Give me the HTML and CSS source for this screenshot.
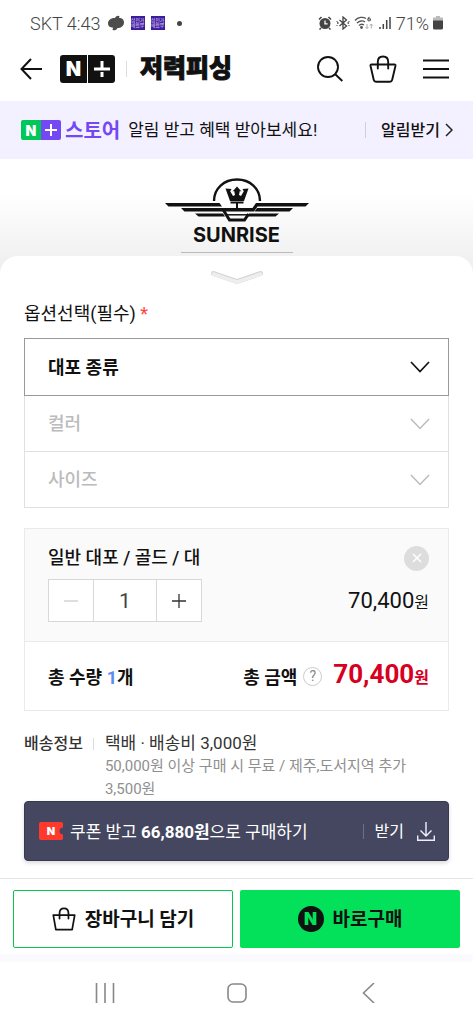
FILE: index.html
```html
<!DOCTYPE html>
<html lang="ko">
<head>
<meta charset="utf-8">
<meta name="viewport" content="width=device-width, initial-scale=1">
<title>저력피싱</title>
<link rel="stylesheet" href="styles.css">
</head>
<body>
<div class="status">
  <span class="status-text">SKT 4:43</span>
  <svg class="status-swirl" width="18" height="16" viewBox="0 0 18 16"><path d="M8 3C9 .5 12 0 12.500 1.500 12.500 2.500 12 2.500 12 3c3.500 0 5 2 5 4.500C17 11 14 13 10.500 13c-1 2.500-4.500 3-5 1.500 0-1 .7-1 .7-1.800C2.500 12.500 1 11 1 8.500 1 5 4 3 8 3z" fill="#4c4c4c"/></svg>
  <span class="status-app">삼전가<br>왜왔뿌</span>
  <span class="status-app">삼전가<br>왜왔뿌</span>
  <span class="status-dot"></span>
  <div class="status-right">
    <svg width="14" height="14" viewBox="0 0 14 14"><circle cx="7" cy="7.500" r="5.500" fill="#444"/><path d="M1 3.500 3.500 1M13 3.500 10.500 1M3 12l-1.500 1.500M11 12l1.500 1.500" stroke="#444" stroke-width="1.500"/><path d="M7 4.500v3.300h2.600" stroke="#fff" stroke-width="1.300" fill="none"/></svg>
    <svg width="14" height="14" viewBox="0 0 14 14" fill="none" stroke="#444" stroke-width="1.300"><path d="m3.500 4 7 6L7 13V1l3.500 3-7 6"/><path d="M1 7h1.600M11.500 7h1.600M1 5v.8M13 5v.8M1 9v.8M13 9v.8"/></svg>
    <svg width="20" height="14" viewBox="0 0 20 14" fill="none" stroke="#555" stroke-width="1.300"><path d="M1 4.500C4 1 9 .5 12 2.500M3 7c2.500-2.500 6-2.500 8-1M5 9.500c1.500-1.500 3.500-1.500 5-.5"/><circle cx="7.500" cy="11.500" r=".8" fill="#555"/><path d="M15.500 1c-2 1-2 4-.5 4 2 0 2-2.400 0-2.400-.7 0-1.300.4-1.500 1" stroke-width="1.100"/><path d="M13 8v4.500M11.500 11l1.500 1.500 1.500-1.500M17.300 12.500V8M15.800 9.500 17.300 8l1.500 1.500" stroke="#aaa" stroke-width="1"/></svg>
    <svg width="14" height="14" viewBox="0 0 14 14" stroke="#444" stroke-width="1.500"><path d="M2 13v-2M5.300 13V8M8.700 13V4M12 13V1"/></svg>
    <span class="status-text">71%</span>
    <svg width="10" height="14" viewBox="0 0 10 14"><path d="M3 0h4v1.500h3V5H0V1.500h3z" fill="#bbb"/><path d="M0 4.500h10V12a1.500 1.500 0 0 1-1.500 1.500h-7A1.500 1.500 0 0 1 0 12z" fill="#444"/></svg>
  </div>
</div>

<header class="header">
  <button class="icon-btn" aria-label="뒤로"><svg width="22" height="22" viewBox="0 0 22 22" fill="none" stroke="#111" stroke-width="2"><path d="M22 11H1.500M11 1 1.500 11 11 21"/></svg></button>
  <a class="plus-logo" href="#"><span class="plus-cell">N</span><span class="plus-cell"><svg width="16" height="16" viewBox="0 0 16 16" stroke="#fff" stroke-width="3"><path d="M0 8h16M8 0v9M8 11v5"/></svg></span></a>
  <span class="header-bar"></span>
  <a class="shop-name" href="#">저력피싱</a>
  <nav class="header-actions">
    <button class="icon-btn" aria-label="검색"><svg width="26" height="26" viewBox="0 0 26 26" fill="none" stroke="#111" stroke-width="1.900"><circle cx="11" cy="11" r="10"/><path d="m18 18 7.300 7"/></svg></button>
    <button class="icon-btn" aria-label="장바구니"><svg width="28" height="28" viewBox="0 0 28 28" fill="none" stroke="#111" stroke-width="1.900" stroke-linejoin="round" stroke-linecap="round"><path d="M2.500 9.500h23q1.200 0 1 1.200l-3.300 14q-.5 2-2.300 2H7q-1.800 0-2.300-2l-3.200-14q-.2-1.200 1-1.200zM8.800 13.500V7C8.800 3.500 11 1.500 14 1.500S19.200 3.500 19.200 7v6.500"/></svg></button>
    <button class="icon-btn" aria-label="메뉴"><svg width="26" height="20" viewBox="0 0 26 20" stroke="#111" stroke-width="2"><path d="M0 1.500h26M0 10h26M0 18.500h26"/></svg></button>
  </nav>
</header>

<div class="banner">
  <span class="store-mark"><span class="store-n">N</span><span class="store-plus"><svg width="12" height="12" viewBox="0 0 12 12" stroke="#fff" stroke-width="2"><path d="M0 6h12M6 0v12"/></svg></span></span>
  <strong class="store-word">스토어</strong>
  <span class="banner-text">알림 받고 혜택 받아보세요!</span>
  <a class="banner-link" href="#"><span class="banner-label">알림받기</span><svg width="8" height="14" viewBox="0 0 8 14" fill="none" stroke="#222" stroke-width="1.500"><path d="m1 1 6 6-6 6"/></svg></a>
</div>

<main class="main">
  <section class="hero">
    <svg width="144" height="44" viewBox="0 0 144 44" fill="none" stroke="#111">
      <path d="M49 23C49 10.500 59 1.500 72 1.500S95 10.500 95 23" stroke-width="2.400"/>
      <path d="M0 25h54.500l2.500 3.500H3.500zM144 25H91l-3.500 5H16l3.500 3.500H89l3.500-5h48z" fill="#111" stroke="none"/>
      <path d="M128 30H92l-2.500 3.500h35zM30 35.500h28l2 3H33.500zM114 35.500H84l-2 3h28.500z" fill="#111" stroke="none"/>
      <path d="m58 31.500 6.500 10.500h15L83.500 36" stroke-width="3"/>
      <path d="M62 36.800h20" stroke-width="1.500"/>
      <path d="m60.500 10.500 6 .5-1.300 2.200 2.800 4.800 2-1-.8-4-1.700.5L72 8.500l4.500 5-1.700-.5-.8 4 2 1 2.800-4.800-1.300-2.200 6-.5-4.500 12.500H65z" fill="#111" stroke="none"/>
      <path d="M65.500 24.500h13M72 24v6.500" stroke-width="2"/>
    </svg>
    <strong class="brand">SUNRISE</strong>
    <span class="hero-line"></span>
  </section>

  <section class="sheet">
    <button class="handle" aria-label="옵션 닫기"><svg width="54" height="16" viewBox="0 0 54 16" fill="none" stroke-linecap="round" stroke-linejoin="round"><path d="m3.500 3.500 23.500 8 23.500-8" stroke="#d2d2d2" stroke-width="5"/><path d="m3.500 4 23.500 8 23.500-8" stroke="#eee" stroke-width="3.600"/></svg></button>
    <h2 class="option-title">옵션선택(필수) <span class="required">*</span></h2>

    <div class="options">
      <div class="option option-active">
        <select class="option-select" aria-label="대포 종류"><option>대포 종류</option></select>
        <svg class="chevron" width="20" height="12" viewBox="0 0 20 12" fill="none" stroke="currentColor" stroke-width="1.700"><path d="m1 1 9 9.500L19 1"/></svg>
      </div>
      <div class="option">
        <select class="option-select" aria-label="컬러" disabled><option>컬러</option></select>
        <svg class="chevron" width="20" height="12" viewBox="0 0 20 12" fill="none" stroke="currentColor" stroke-width="1.500"><path d="m1 1 9 9.500L19 1"/></svg>
      </div>
      <div class="option">
        <select class="option-select" aria-label="사이즈" disabled><option>사이즈</option></select>
        <svg class="chevron" width="20" height="12" viewBox="0 0 20 12" fill="none" stroke="currentColor" stroke-width="1.500"><path d="m1 1 9 9.500L19 1"/></svg>
      </div>
    </div>

    <div class="cart">
      <div class="item">
        <div class="item-row">
          <span class="item-name">일반 대포 / 골드 / 대</span>
          <button class="remove" aria-label="삭제"><svg width="10" height="10" viewBox="0 0 10 10" stroke="#fff" stroke-width="1.500"><path d="m1 1 8 8M9 1 1 9"/></svg></button>
        </div>
        <div class="item-row">
          <div class="stepper">
            <button class="step" aria-label="수량 감소"><svg width="16" height="16" viewBox="0 0 16 16" stroke="#ccc" stroke-width="1.300"><path d="M1 8h14"/></svg></button>
            <input class="qty" type="text" value="1" aria-label="수량">
            <button class="step" aria-label="수량 증가"><svg width="16" height="16" viewBox="0 0 16 16" stroke="#333" stroke-width="1.300"><path d="M1 8h14M8 1v14"/></svg></button>
          </div>
          <span class="price">70,400<span class="won">원</span></span>
        </div>
      </div>
      <div class="total">
        <span class="total-label">총 수량 <span class="count">1</span>개</span>
        <span class="total-right">
          <span class="total-label">총 금액</span>
          <button class="help" aria-label="총 금액 도움말">?</button>
          <strong class="total-price">70,400<span class="won">원</span></strong>
        </span>
      </div>
    </div>

    <div class="delivery">
      <span class="delivery-label">배송정보</span>
      <div class="delivery-body">
        <p class="delivery-main">택배 · 배송비 3,000원</p>
        <p class="delivery-sub">50,000원 이상 구매 시 무료 / 제주,도서지역 추가 3,500원</p>
      </div>
    </div>

    <button class="coupon">
      <span class="ticket">N</span>
      <span class="coupon-text">쿠폰 받고 <b>66,880원</b>으로 구매하기</span>
      <span class="coupon-get">받기</span>
      <svg width="18" height="19" viewBox="0 0 18 19" fill="none" stroke="#eef" stroke-width="1.400"><path d="M9 0v14M3.500 8.500 9 14l5.500-5.500M.7 13.500v4.800h16.600v-4.800"/></svg>
    </button>
  </section>
</main>

<footer class="actions">
  <button class="action action-cart"><svg width="24" height="24" viewBox="0 0 28 28" fill="none" stroke="#111" stroke-width="2" stroke-linejoin="round" stroke-linecap="round"><path d="M1.500 9.500h25L23.500 26.500h-19zM8.800 13.500V7C8.800 3.500 11 1.500 14 1.500S19.200 3.500 19.200 7v6.500"/></svg><span class="action-label">장바구니 담기</span></button>
  <button class="action action-buy"><span class="n-badge">N</span><span class="action-label">바로구매</span></button>
</footer>

<nav class="system-nav">
  <button class="icon-btn" aria-label="최근 앱"><svg width="20" height="20" viewBox="0 0 20 20" stroke="#888" stroke-width="1.600"><path d="M1.500 0v20M10 0v20M18.500 0v20"/></svg></button>
  <button class="icon-btn" aria-label="홈"><svg width="20" height="20" viewBox="0 0 20 20" fill="none" stroke="#888" stroke-width="1.600"><rect x="1" y="1" width="18" height="18" rx="5"/></svg></button>
  <button class="icon-btn" aria-label="이전"><svg width="20" height="20" viewBox="0 0 20 20" fill="none" stroke="#888" stroke-width="1.600"><path d="M16 0 5.500 10 16 20"/></svg></button>
</nav>
</body>
</html>
```

FILE: styles.css
```css
* {
  box-sizing: border-box;
}

body {
  margin: 0;
  min-height: 100vh;
  display: flex;
  flex-direction: column;
  background: #fff;
  color: #111;
  font-family: Roboto, "Noto Sans CJK KR", sans-serif;
  font-size: 16px;
}

button,
input,
select {
  margin: 0;
  padding: 0;
  border: 0;
  background: none;
  color: inherit;
  font: inherit;
}

a {
  color: inherit;
  text-decoration: none;
}

svg {
  display: block;
  flex: none;
}

p,
h2 {
  margin: 0;
}

.icon-btn {
  display: flex;
}

.status {
  display: flex;
  align-items: center;
  height: 46px;
  padding: 0 30px;
  gap: 6px;
  color: #444;
}

.status-text {
  font-size: 18px;
  font-weight: 300;
}

.status-app {
  width: 14px;
  height: 14px;
  padding-top: 2px;
  background: #3a1d9a;
  color: #e6d5ff;
  font-size: 5px;
  line-height: 5px;
  text-align: center;
  white-space: nowrap;
  overflow: hidden;
}

.status-dot {
  width: 5px;
  height: 5px;
  margin-left: 6px;
  border-radius: 50%;
  background: #444;
}

.status-right {
  display: flex;
  align-items: center;
  gap: 4px;
  margin-left: auto;
}

.header {
  display: flex;
  align-items: center;
  height: 55px;
  padding: 0 24px 10px 20px;
}

.plus-logo {
  display: flex;
  gap: 1px;
  margin-left: 18px;
}

.plus-cell {
  display: flex;
  align-items: center;
  justify-content: center;
  width: 27px;
  height: 28px;
  border-radius: 3px 0 0 3px;
  background: #111;
  color: #fff;
  font-family: Inter, sans-serif;
  font-size: 20px;
  font-weight: 900;
}

.plus-cell + .plus-cell {
  border-radius: 0 3px 3px 0;
}

.header-bar {
  width: 1px;
  height: 16px;
  margin: 0 13px 0 11px;
  background: #ddd;
}

.shop-name {
  font-size: 25px;
  font-weight: 900;
  line-height: 32px;
  -webkit-text-stroke: 1px #111;
}

.header-actions {
  display: flex;
  align-items: center;
  gap: 26px;
  margin-left: auto;
}

.banner {
  display: flex;
  align-items: center;
  height: 58px;
  padding: 0 20px 0 21px;
  background: #f3f0ff;
}

.store-mark {
  display: flex;
  border-radius: 2px;
  overflow: hidden;
}

.store-n,
.store-plus {
  display: flex;
  align-items: center;
  justify-content: center;
  width: 20px;
  height: 20px;
  background: #00c75a;
  color: #fff;
  font-family: Inter, sans-serif;
  font-size: 14px;
  font-weight: 900;
}

.store-plus {
  background: #7448f5;
}

.store-word {
  margin-left: 4px;
  padding-bottom: 2px;
  color: #7448f5;
  font-size: 20px;
  font-weight: 700;
}

.banner-text {
  margin-left: 8px;
  padding-bottom: 3px;
  font-size: 17px;
  white-space: nowrap;
}

.banner-link {
  display: flex;
  align-items: center;
  gap: 5px;
  margin-left: auto;
  padding-left: 16px;
  background: linear-gradient(#d0cde0, #d0cde0) left center / 1px 16px no-repeat;
  font-weight: 500;
  white-space: nowrap;
}

.banner-label {
  padding-bottom: 2px;
}

.main {
  flex: 1;
}

.hero {
  display: flex;
  flex-direction: column;
  align-items: center;
  height: 114px;
  padding-top: 19px;
  background: linear-gradient(#fff 30%, #f0f0f0 90%);
}

.brand {
  font-family: Inter, sans-serif;
  font-size: 20px;
  font-weight: 700;
  line-height: 26px;
}

.hero-line {
  width: 112px;
  height: 1px;
  margin-top: 4px;
  background: #bbb;
}

.sheet {
  position: relative;
  display: flex;
  flex-direction: column;
  margin-top: -17px;
  padding: 14px 24px 17px;
  border-radius: 18px 18px 0 0;
  background: #fff;
}

.handle {
  align-self: center;
}

.option-title {
  margin: 14px 0 10px;
  font-size: 18px;
  font-weight: 400;
  line-height: 28px;
}

.required {
  color: #f44;
}

.options {
  border: 1px solid #e0e0e0;
  border-top: 0;
}

.option {
  position: relative;
  height: 56px;
  border-top: 1px solid #e0e0e0;
  color: #bbb;
}

.option:nth-child(2) {
  height: 55px;
  border-top: 0;
}

.option-active {
  height: 58px;
  margin: 0 -1px;
  border: 1px solid #999;
  color: #111;
}

.option-select {
  width: 100%;
  height: 100%;
  padding: 0 50px 0 23px;
  appearance: none;
  font-size: 18px;
  font-weight: 500;
  opacity: 1;
}

.option-active .option-select {
  font-weight: 700;
}

.chevron {
  position: absolute;
  top: 50%;
  right: 18px;
  margin-top: -6px;
  pointer-events: none;
}

.cart {
  margin-top: 20px;
  border: 1px solid #e8eaed;
}

.item {
  padding: 16px 19px 19px 23px;
  border-bottom: 1px solid #e8eaed;
  background: #fafafa;
}

.item-row {
  display: flex;
  align-items: center;
  justify-content: space-between;
}

.item-name {
  font-size: 18px;
  font-weight: 500;
  line-height: 26px;
}

.remove {
  display: flex;
  align-items: center;
  justify-content: center;
  width: 25px;
  height: 25px;
  border-radius: 50%;
  background: #ddd;
}

.stepper {
  display: flex;
  height: 43px;
  margin-top: 8px;
  border: 1px solid #d8d8d8;
  background: #fff;
}

.step {
  display: flex;
  align-items: center;
  justify-content: center;
  width: 44px;
}

.qty {
  width: 64px;
  border: 1px solid #d8d8d8;
  border-width: 0 1px;
  color: #444;
  font-size: 21px;
  text-align: center;
}

.price {
  margin-top: 8px;
  font-size: 22px;
}

.won {
  font-size: 16px;
}

.total {
  display: flex;
  align-items: center;
  justify-content: space-between;
  height: 68px;
  padding: 0 19px 0 23px;
}

.total-label {
  font-size: 18px;
  font-weight: 700;
}

.count {
  color: #5b8def;
}

.total-right {
  display: flex;
  align-items: center;
}

.help {
  width: 19px;
  height: 19px;
  margin: 0 11px 0 6px;
  border: 1px solid #ccc;
  border-radius: 50%;
  color: #888;
  font-size: 14px;
  line-height: 17px;
}

.total-price {
  color: #d7001f;
  font-size: 26px;
  line-height: 32px;
}

.delivery {
  display: flex;
  margin-top: 21px;
  line-height: 23px;
}

.delivery-label {
  flex: none;
  align-self: flex-start;
  padding-right: 11px;
  background: linear-gradient(#ddd, #ddd) right center / 1px 12px no-repeat;
  color: #333;
  font-weight: 500;
}

.delivery-body {
  padding-left: 11px;
  word-break: keep-all;
}

.delivery-main {
  color: #333;
  font-size: 17px;
}

.delivery-sub {
  color: #8f8f8f;
  font-size: 15px;
}

.coupon {
  display: flex;
  align-items: center;
  height: 60px;
  padding: 0 13px 0 14px;
  border: 1px solid #363950;
  border-radius: 4px;
  background: #44475f;
  box-shadow: 0 2px 4px rgba(0, 0, 0, 0.15);
  color: #fff;
}

.ticket {
  width: 24px;
  height: 18px;
  border-radius: 2px;
  background: radial-gradient(circle at 100% 50%, #44475f 3px, #ff3a2d 4px);
  font-family: Inter, sans-serif;
  font-size: 11px;
  font-weight: 900;
  line-height: 18px;
}

.coupon-text {
  margin-left: 7px;
  padding-bottom: 2px;
  font-size: 17px;
  white-space: nowrap;
}

.coupon-get {
  margin: 0 13px 0 auto;
  padding: 0 0 2px 12px;
  background: linear-gradient(#6d7086, #6d7086) left center / 1px 15px no-repeat;
}

.actions {
  display: grid;
  grid-template-columns: 1fr 1fr;
  gap: 7px;
  padding: 11px 13px 14px;
  border-top: 1px solid #e5e5e8;
  background: linear-gradient(#fff 75px, #fafaff 0);
}

.action {
  display: flex;
  align-items: center;
  justify-content: center;
  gap: 9px;
  height: 58px;
  border-radius: 2px;
  font-size: 19px;
  font-weight: 700;
}

.action-label {
  padding-bottom: 4px;
}

.action-cart {
  border: 1px solid #06c552;
}

.action-buy {
  background: #03e15b;
}

.n-badge {
  width: 26px;
  height: 26px;
  border-radius: 50%;
  background: #111;
  color: #03e15b;
  font-family: Inter, sans-serif;
  font-size: 17px;
  font-weight: 900;
  line-height: 26px;
}

.system-nav {
  display: flex;
  align-items: center;
  justify-content: space-between;
  height: 62px;
  padding: 0 20%;
}
```
